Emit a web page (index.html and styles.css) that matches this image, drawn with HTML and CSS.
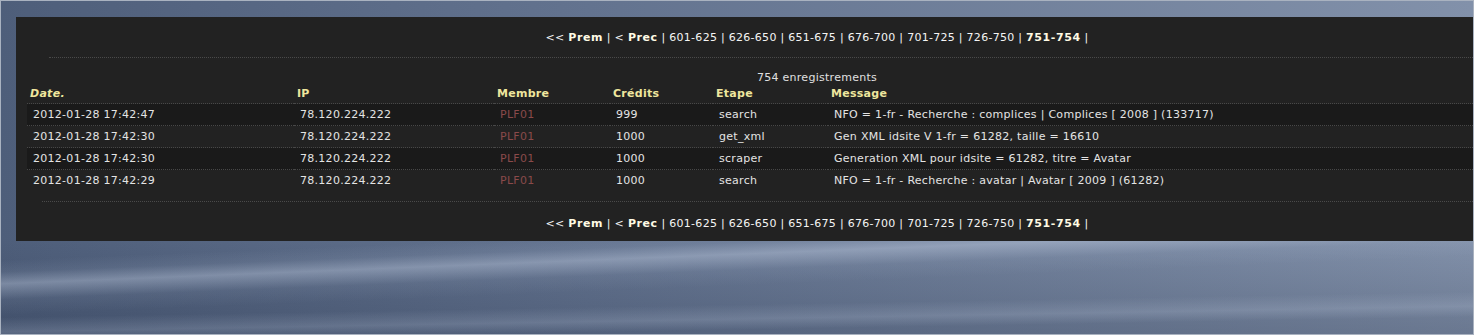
FILE: index.html
```html
<!DOCTYPE html>
<html lang="fr">
<head>
<meta charset="utf-8">
<title>Logs</title>
<link rel="stylesheet" href="styles.css">
</head>
<body>
<div class="panel">
  <div class="pager pager-top">&lt;&lt; <b>Prem</b> | &lt; <b>Prec</b> | 601-625 | 626-650 | 651-675 | 676-700 | 701-725 | 726-750 | <b>751-754</b> |</div>
  <div class="sep sep-top"></div>
  <div class="count">754 enregistrements</div>
  <table class="log">
    <thead>
      <tr>
        <th class="c-date"><i>Date.</i></th>
        <th class="c-ip">IP</th>
        <th class="c-mem">Membre</th>
        <th class="c-cred">Crédits</th>
        <th class="c-step">Etape</th>
        <th class="c-msg">Message</th>
      </tr>
    </thead>
    <tbody>
      <tr class="odd">
        <td>2012-01-28 17:42:47</td><td>78.120.224.222</td><td class="member">PLF01</td><td>999</td><td>search</td><td>NFO = 1-fr - Recherche : complices | Complices [ 2008 ] (133717)</td>
      </tr>
      <tr>
        <td>2012-01-28 17:42:30</td><td>78.120.224.222</td><td class="member">PLF01</td><td>1000</td><td>get_xml</td><td>Gen XML idsite V 1-fr = 61282, taille = 16610</td>
      </tr>
      <tr class="odd">
        <td>2012-01-28 17:42:30</td><td>78.120.224.222</td><td class="member">PLF01</td><td>1000</td><td>scraper</td><td>Generation XML pour idsite = 61282, titre = Avatar</td>
      </tr>
      <tr>
        <td>2012-01-28 17:42:29</td><td>78.120.224.222</td><td class="member">PLF01</td><td>1000</td><td>search</td><td>NFO = 1-fr - Recherche : avatar | Avatar [ 2009 ] (61282)</td>
      </tr>
    </tbody>
  </table>
  <div class="sep sep-bottom"></div>
  <div class="pager pager-bottom">&lt;&lt; <b>Prem</b> | &lt; <b>Prec</b> | 601-625 | 626-650 | 651-675 | 676-700 | 701-725 | 726-750 | <b>751-754</b> |</div>
</div>
</body>
</html>
```

FILE: styles.css
```css
html {
  overflow: hidden;
  height: 100%;
  background:
    linear-gradient(177.7deg, transparent 0 66%, rgba(190,204,226,0.10) 69%, rgba(200,212,232,0.40) 72%, rgba(200,212,232,0.28) 73.5%, rgba(190,204,226,0.08) 76%, transparent 80%),
    linear-gradient(179deg, transparent 0 88%, rgba(200,212,232,0.20) 92%, transparent 95%),
    linear-gradient(to bottom, transparent 0 72%, rgba(20,30,52,0.22) 100%),
    linear-gradient(to right, #4e5e7a 0%, #63738f 40%, #8291aa 100%);
}

body {
  margin: 0;
  height: 100%;
  box-sizing: border-box;
  overflow: hidden;
  border: 1px solid #a9b2c0;
  padding: 16px 0 0 15px;
  font-family: "DejaVu Sans", Verdana, sans-serif;
  font-size: 11px;
  line-height: 14px;
  letter-spacing: 0.28px;
  color: #e6e6e6;
}

.panel {
  width: 1602px;
  box-sizing: border-box;
  background: #222222;
  padding: 14px 11px 10px;
}

.pager {
  text-align: center;
  color: #f4f4f4;
  white-space: nowrap;
}

.pager b {
  color: #fffbe4;
  letter-spacing: 0.6px;
}

.sep {
  border-top: 1px dotted #4a4a4a;
  height: 0;
}

.sep-top {
  margin: 12px 0 0 22px;
}

.sep-bottom {
  margin: 10px 0 0 15px;
}

.count {
  margin-top: 13px;
  text-align: center;
  color: #e0e0e0;
}

.pager-bottom {
  margin-top: 15px;
}

.log {
  width: 100%;
  border-collapse: collapse;
  white-space: nowrap;
}

.log th {
  text-align: left;
  font-weight: bold;
  color: #eee69e;
  padding: 2px 3px 2px;
  line-height: 14px;
}

.log th i {
  font-style: italic;
}

.log td {
  border-top: 1px dotted #484848;
  padding: 0 6px;
  height: 21px;
  line-height: 21px;
  color: #e4e4e4;
}

.log tr.odd td {
  background: #1a1a1a;
}

.log td.member {
  color: #8a4a4a;
}

.c-date { width: 261px; }
.c-ip { width: 194px; }
.c-mem { width: 110px; }
.c-cred { width: 97px; }
.c-step { width: 109px; }
```
